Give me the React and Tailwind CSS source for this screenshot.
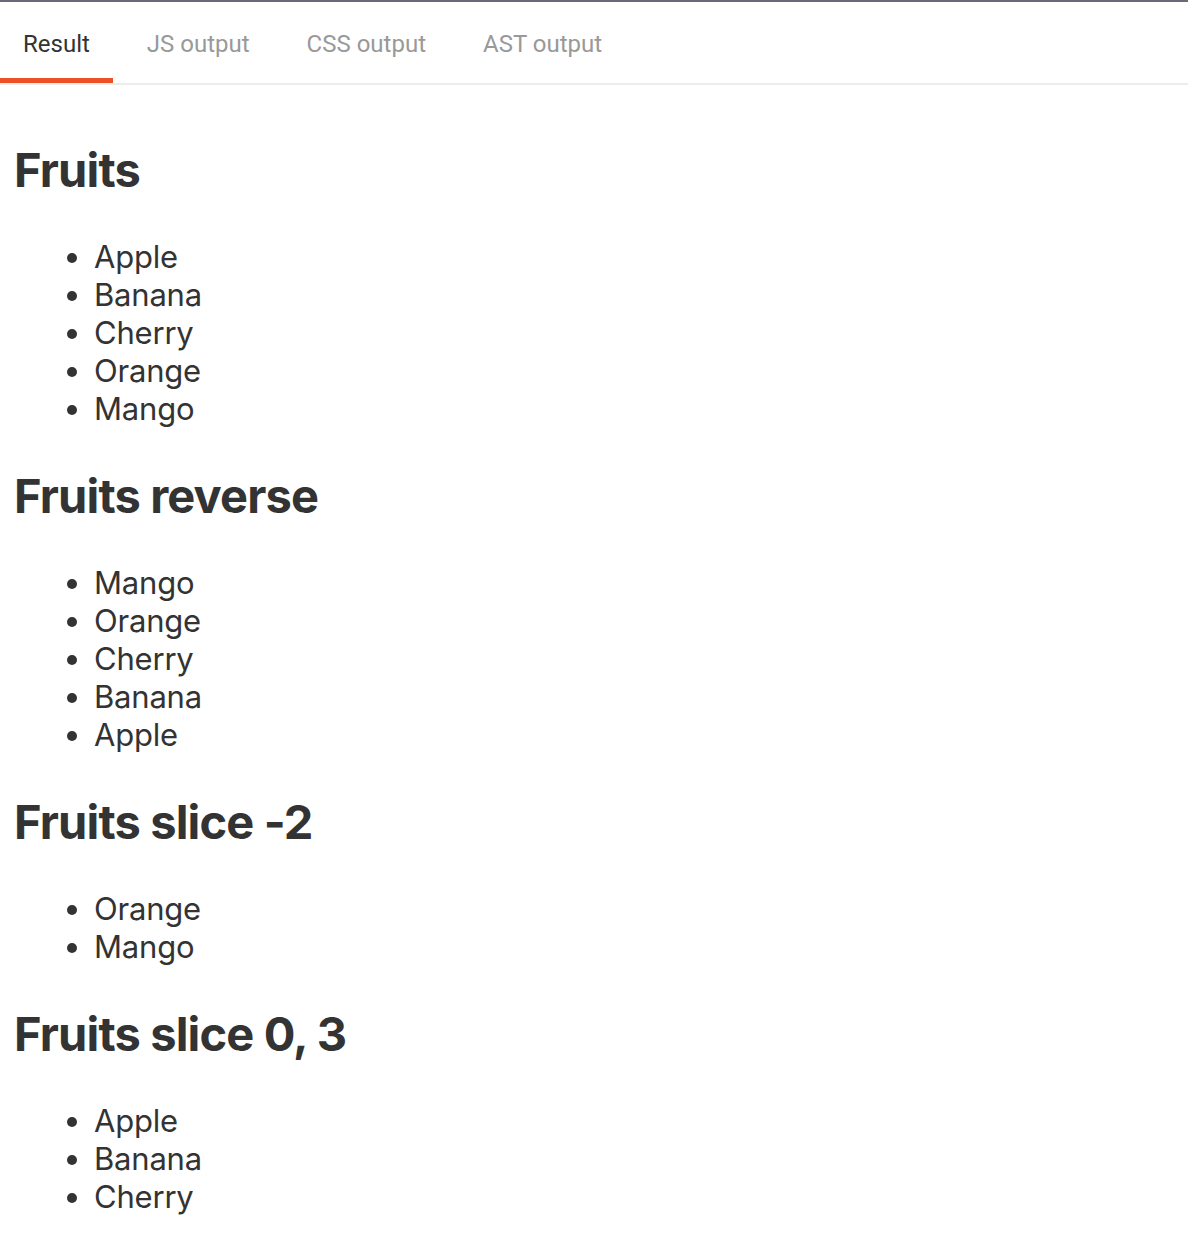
const tabs = ["Result", "JS output", "CSS output", "AST output"];

const sections = [
  { title: "Fruits", items: ["Apple", "Banana", "Cherry", "Orange", "Mango"] },
  { title: "Fruits reverse", items: ["Mango", "Orange", "Cherry", "Banana", "Apple"] },
  { title: "Fruits slice -2", items: ["Orange", "Mango"] },
  { title: "Fruits slice 0, 3", items: ["Apple", "Banana", "Cherry"] },
];

export default function App() {
  return (
    <div className="min-h-screen bg-white text-[#333]">
      {/* tab bar */}
      <div className="border-t-2 border-[#6b6878] border-b-2 border-b-[#ececec] flex h-[85px]">
        {tabs.map((t, i) => (
          <div
            key={t}
            className={
              i === 0
                ? "relative px-[23px] flex items-center text-[24px] text-[#333] font-['Roboto',sans-serif] pt-[3px]"
                : "relative px-[23px] ml-[11px] flex items-center text-[24px] text-[#999] font-['Roboto',sans-serif] pt-[3px]"
            }
          >
            {t}
            {i === 0 && <span className="absolute left-0 right-0 bottom-0 h-[5px] bg-[#ec5027]"></span>}
          </div>
        ))}
      </div>

      {/* result */}
      <div className="px-4 pt-[17px] font-['Inter',sans-serif]">
        {sections.map((s) => (
          <div key={s.title}>
            <h2 className="text-[47px] font-bold my-[40px] leading-[56px] tracking-[-0.85px] -ml-[2px]">{s.title}</h2>
            <ul className="list-disc pl-[78px] text-[31px] leading-[38px] tracking-[-0.2px] my-[32px]">
              {s.items.map((it, i) => (
                <li key={i}>{it}</li>
              ))}
            </ul>
          </div>
        ))}
      </div>
    </div>
  );
}
